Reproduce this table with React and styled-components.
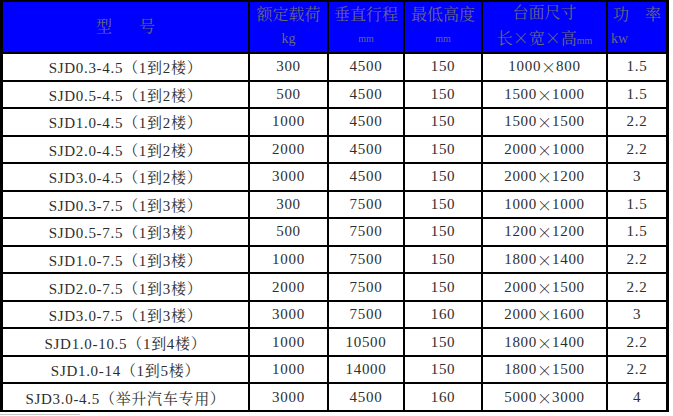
import React from "react";
import styled, { createGlobalStyle } from "styled-components";

const Global = createGlobalStyle`
  html, body { margin: 0; padding: 0; background: #fff; }
  body { font-family: "Liberation Serif", "Noto Serif CJK SC", "Noto Sans CJK SC", serif; }
`;

const Table = styled.div`
  display: grid;
  grid-template-columns: 245px 77px 74px 76px 123px 58px;
  grid-template-rows: 50px repeat(13, 1fr);
  gap: 2px;
  width: 669px;
  height: 412px;
  box-sizing: border-box;
  padding: 2px 3px 2px 3px;
  background: #000;
`;

const HeadCell = styled.div`
  background: #0000ff;
  color: #68687c;
  font-size: 16px;
  line-height: 24px;
  display: flex;
  flex-direction: column;
  justify-content: center;
  align-items: center;
  text-align: center;
  white-space: nowrap;
  overflow: hidden;
`;

const Unit = styled.span`
  font-size: ${(p) => p.$size || 13}px;
  align-self: ${(p) => (p.$left ? "flex-start" : "center")};
  padding-left: ${(p) => (p.$left ? "3px" : "0")};
`;

const Gap = styled.span`
  display: inline-block;
  width: ${(p) => p.$w}px;
`;

const Cell = styled.div`
  background: #fff;
  color: #2e2e2e;
  font-size: 15px;
  letter-spacing: 0.7px;
  display: flex;
  align-items: center;
  justify-content: center;
  white-space: nowrap;
`;

const Wide = styled.span`
  font-family: "Noto Sans CJK SC", sans-serif;
  font-size: ${(p) => p.$size}px;
  display: inline-block;
  width: ${(p) => p.$size}px;
  text-align: center;
  font-weight: 300;
  letter-spacing: 0;
`;

const Artifact = styled.div`
  margin-top: 2px;
  width: 80px;
  height: 1px;
  background: #c8c8c8;
`;

const rows = [
  ["SJD0.3-4.5（1到2楼）", "300", "4500", "150", "1000×800", "1.5"],
  ["SJD0.5-4.5（1到2楼）", "500", "4500", "150", "1500×1000", "1.5"],
  ["SJD1.0-4.5（1到2楼）", "1000", "4500", "150", "1500×1500", "2.2"],
  ["SJD2.0-4.5（1到2楼）", "2000", "4500", "150", "2000×1000", "2.2"],
  ["SJD3.0-4.5（1到2楼）", "3000", "4500", "150", "2000×1200", "3"],
  ["SJD0.3-7.5（1到3楼）", "300", "7500", "150", "1000×1000", "1.5"],
  ["SJD0.5-7.5（1到3楼）", "500", "7500", "150", "1200×1200", "1.5"],
  ["SJD1.0-7.5（1到3楼）", "1000", "7500", "150", "1800×1400", "2.2"],
  ["SJD2.0-7.5（1到3楼）", "2000", "7500", "150", "2000×1500", "2.2"],
  ["SJD3.0-7.5（1到3楼）", "3000", "7500", "160", "2000×1600", "3"],
  ["SJD1.0-10.5（1到4楼）", "1000", "10500", "150", "1800×1400", "2.2"],
  ["SJD1.0-14（1到5楼）", "1000", "14000", "150", "1800×1500", "2.2"],
  ["SJD3.0-4.5（举升汽车专用）", "3000", "4500", "160", "5000×3000", "4"],
];

function withWide(text, size) {
  const parts = text.split("×");
  return parts.map((p, i) => (
    <React.Fragment key={i}>
      {p}
      {i < parts.length - 1 && <Wide $size={size}>×</Wide>}
    </React.Fragment>
  ));
}

export default function App() {
  return (
    <>
      <Global />
      <Table>
        <HeadCell>
          <span>
            型<Gap $w={27} />号
          </span>
        </HeadCell>
        <HeadCell>
          <span>额定载荷</span>
          <Unit $size={14}>kg</Unit>
        </HeadCell>
        <HeadCell>
          <span>垂直行程</span>
          <Unit $size={10}>mm</Unit>
        </HeadCell>
        <HeadCell>
          <span>最低高度</span>
          <Unit $size={10}>mm</Unit>
        </HeadCell>
        <HeadCell>
          <span>台面尺寸</span>
          <span>
            {withWide("长×宽×高", 16)}
            <Unit $size={10}>mm</Unit>
          </span>
        </HeadCell>
        <HeadCell>
          <span>功　率</span>
          <Unit $size={14} $left>kw</Unit>
        </HeadCell>
        {rows.map((r, i) =>
          r.map((c, j) => <Cell key={`${i}-${j}`}>{withWide(c, 15)}</Cell>)
        )}
      </Table>
      <Artifact />
    </>
  );
}
